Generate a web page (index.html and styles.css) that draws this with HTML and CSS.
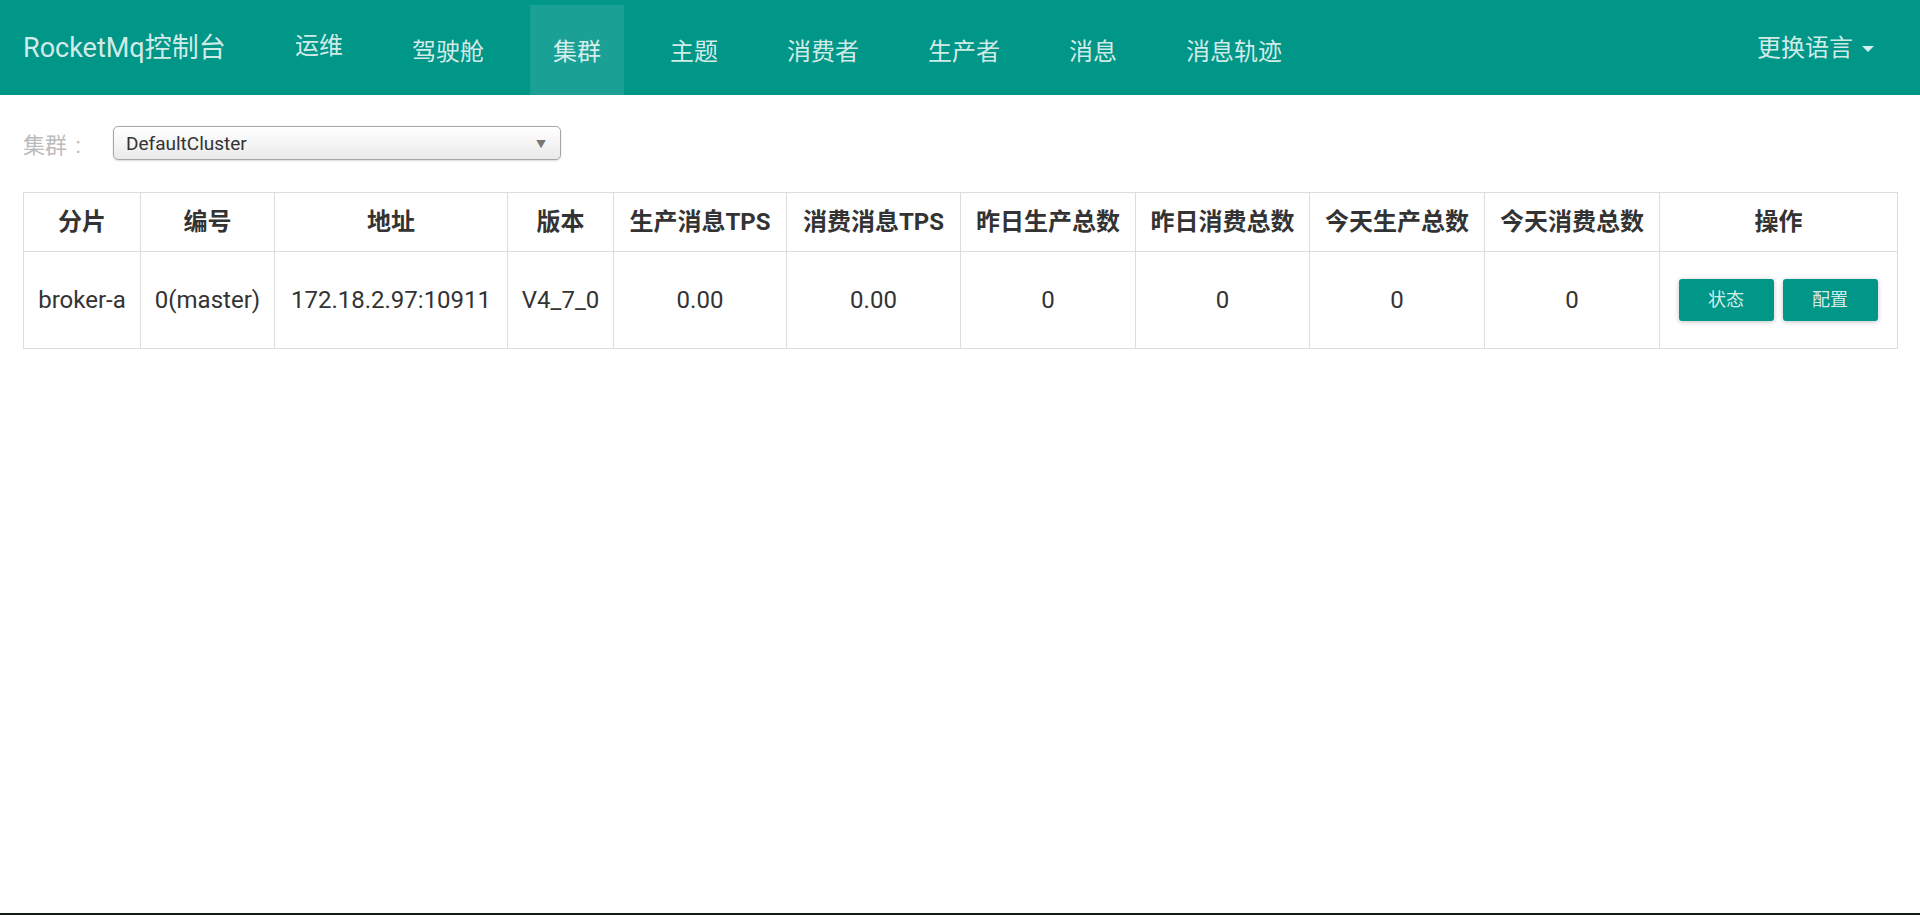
FILE: index.html
```html
<!DOCTYPE html>
<html lang="zh-CN">
<head>
<meta charset="utf-8">
<title>RocketMq控制台</title>
<link rel="stylesheet" href="styles.css">
</head>
<body>
<div class="page">
  <header class="navbar">
    <div class="brand">RocketMq控制台</div>
    <ul class="nav">
      <li class="nav-item nav-item-ops">运维</li>
      <li class="nav-item">驾驶舱</li>
      <li class="nav-item active">集群</li>
      <li class="nav-item">主题</li>
      <li class="nav-item">消费者</li>
      <li class="nav-item">生产者</li>
      <li class="nav-item">消息</li>
      <li class="nav-item">消息轨迹</li>
    </ul>
    <div class="lang">更换语言<span class="caret"></span></div>
  </header>
  <main class="content">
    <div class="filter">
      <span class="filter-label">集群 :</span>
      <div class="select-box"><span class="select-text">DefaultCluster</span><span class="select-arrow">▼</span></div>
    </div>
    <table class="cluster-table">
      <colgroup>
        <col class="c1"><col class="c2"><col class="c3"><col class="c4"><col class="c5"><col class="c6"><col class="c7"><col class="c8"><col class="c9"><col class="c10"><col class="c11">
      </colgroup>
      <thead>
        <tr>
          <th>分片</th><th>编号</th><th>地址</th><th>版本</th><th>生产消息TPS</th><th>消费消息TPS</th><th>昨日生产总数</th><th>昨日消费总数</th><th>今天生产总数</th><th>今天消费总数</th><th>操作</th>
        </tr>
      </thead>
      <tbody>
        <tr>
          <td>broker-a</td><td>0(master)</td><td>172.18.2.97:10911</td><td>V4_7_0</td><td>0.00</td><td>0.00</td><td>0</td><td>0</td><td>0</td><td>0</td>
          <td><div class="ops"><button class="btn">状态</button><button class="btn">配置</button></div></td>
        </tr>
      </tbody>
    </table>
  </main>
  <div class="bottom-strip"></div>
</div>
</body>
</html>
```
FILE: styles.css
```css
* { box-sizing: border-box; }
html, body { margin: 0; padding: 0; }
body {
  font-family: Roboto, "Noto Sans CJK SC", sans-serif;
  color: #333;
  background: #fff;
}
.page {
  height: 915px;
  display: flex;
  flex-direction: column;
  overflow: hidden;
}
.navbar {
  flex: 0 0 95px;
  height: 95px;
  background: #009688;
  display: flex;
  align-items: center;
  color: rgba(255,255,255,0.84);
}
.brand {
  flex: 0 0 272px;
  padding-left: 23px;
  font-size: 27px;
  line-height: 36px;
  white-space: nowrap;
}
.nav {
  list-style: none;
  margin: 0;
  padding: 0;
  display: flex;
  gap: 23px;
  align-self: stretch;
  padding-top: 5px;
}
.nav-item {
  display: flex;
  align-items: center;
  padding: 4px 23px 0;
  font-size: 24px;
  line-height: 32px;
  white-space: nowrap;
}
.nav-item-ops { padding-top: 0; padding-bottom: 9px; }
.nav-item.active { background: rgba(255,255,255,0.1); }
.lang {
  margin-left: auto;
  padding-right: 46px;
  font-size: 24px;
  line-height: 32px;
  display: flex;
  align-items: center;
  white-space: nowrap;
}
.caret {
  display: inline-block;
  width: 0; height: 0;
  margin-left: 9px;
  margin-top: 2px;
  border-top: 6px solid rgba(255,255,255,0.84);
  border-left: 6px solid transparent;
  border-right: 6px solid transparent;
}
.content {
  flex: 1 1 auto;
  padding: 31px 23px 0;
}
.filter {
  display: flex;
  align-items: center;
  height: 34px;
}
.filter-label {
  width: 90px;
  font-size: 22px;
  color: #bbb;
  white-space: nowrap;
  word-spacing: 3px;
}
.select-box {
  width: 448px;
  height: 34px;
  border: 1px solid #a5a5a5;
  border-radius: 5px;
  background: linear-gradient(#ffffff 0%, #f6f6f6 45%, #e9e9e9 100%);
  box-shadow: 0 1px 2px rgba(0,0,0,0.15);
  display: flex;
  align-items: center;
  padding: 0 14px 0 12px;
}
.select-text {
  font-size: 19px;
  color: #333;
}
.select-arrow {
  margin-left: auto;
  font-size: 10px;
  color: #777;
}
.cluster-table {
  margin-top: 32px;
  width: 1874px;
  table-layout: fixed;
  border-collapse: collapse;
  border: 1px solid #ddd;
}
.c1 { width: 117px; } .c2 { width: 134px; } .c3 { width: 233px; } .c4 { width: 106px; }
.c5 { width: 173px; } .c6 { width: 174px; } .c7 { width: 175px; } .c8 { width: 174px; }
.c9 { width: 175px; } .c10 { width: 175px; } .c11 { width: 238px; }
.cluster-table th, .cluster-table td {
  border: 1px solid #ddd;
  text-align: center;
  vertical-align: middle;
  white-space: nowrap;
  padding: 0 4px;
  font-size: 24px;
  color: #333;
}
.cluster-table th {
  height: 59px;
  font-weight: bold;
  line-height: 34px;
}
.cluster-table td {
  height: 97px;
  line-height: 42px;
}
.ops {
  display: flex;
  justify-content: center;
  gap: 9px;
  padding-right: 1px;
}
.btn {
  width: 95px;
  height: 42px;
  border: none;
  border-radius: 3px;
  background: #009688;
  color: rgba(255,255,255,0.84);
  font-family: Roboto, "Noto Sans CJK SC", sans-serif;
  font-size: 18px;
  line-height: 42px;
  padding: 0;
  box-shadow: 0 1px 6px rgba(0,0,0,0.12), 0 1px 4px rgba(0,0,0,0.12);
}
.bottom-strip {
  flex: 0 0 2px;
  background: #141a14;
}
```
